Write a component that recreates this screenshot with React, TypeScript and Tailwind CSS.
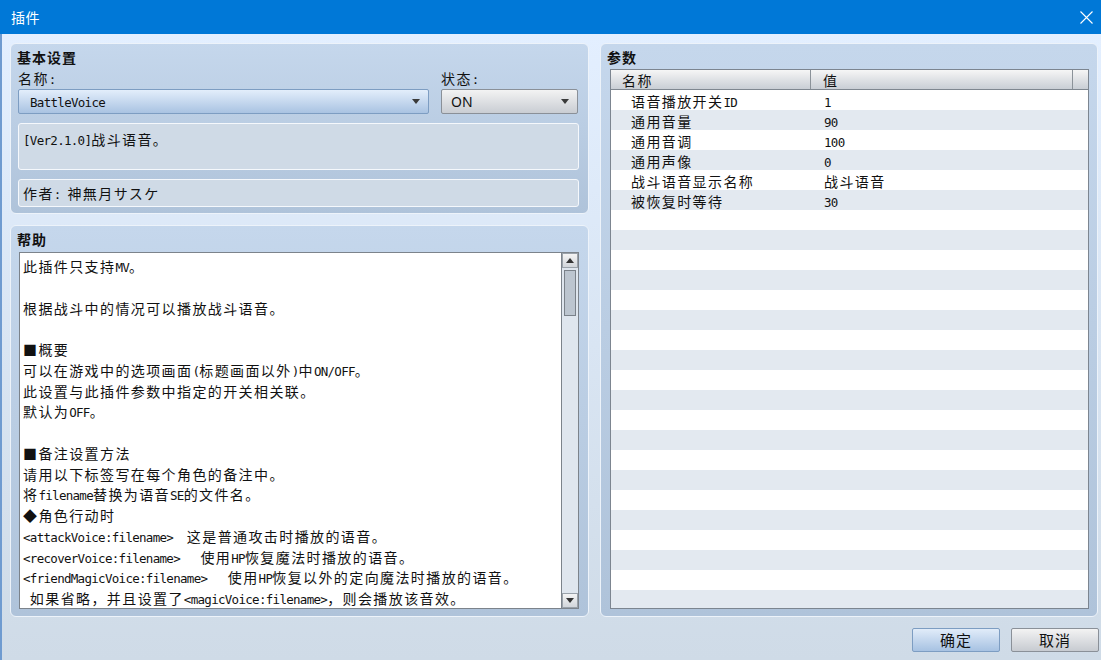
import { Fragment } from "react";

const helpLines = [
  "此插件只支持MV。",
  "",
  "根据战斗中的情况可以播放战斗语音。",
  "",
  "■概要",
  "可以在游戏中的选项画面(标题画面以外)中ON/OFF。",
  "此设置与此插件参数中指定的开关相关联。",
  "默认为OFF。",
  "",
  "■备注设置方法",
  "请用以下标签写在每个角色的备注中。",
  "将filename替换为语音SE的文件名。",
  "◆角色行动时",
  "<attackVoice:filename>  这是普通攻击时播放的语音。",
  "<recoverVoice:filename>   使用HP恢复魔法时播放的语音。",
  "<friendMagicVoice:filename>   使用HP恢复以外的定向魔法时播放的语音。",
  " 如果省略，并且设置了<magicVoice:filename>，则会播放该音效。",
];

const params = [
  { name: "语音播放开关ID", value: "1" },
  { name: "通用音量", value: "90" },
  { name: "通用音调", value: "100" },
  { name: "通用声像", value: "0" },
  { name: "战斗语音显示名称", value: "战斗语音" },
  { name: "被恢复时等待", value: "30" },
];

const ROW_COUNT = 26;

// the editor font: narrow half-width latin, wide CJK
const CJK = /([\u2E80-\u9FFF\u3000-\u303F\uFF00-\uFFEF\u25A0\u25C6]+)/;

function Txt({ children }: { children: string }) {
  const parts = children.split(CJK).filter((p) => p !== "");
  return (
    <>
      {parts.map((part, i) =>
        CJK.test(part) ? (
          <span key={i} className="font-['Noto_Sans_CJK_SC',sans-serif] text-[14px] tracking-[1.4px]">
            {part}
          </span>
        ) : (
          <span key={i} className="font-['DejaVu_Sans_Mono',monospace] text-[12.5px] tracking-[-0.7px]">
            {part}
          </span>
        ),
      )}
    </>
  );
}

function Caret() {
  return (
    <svg width="8" height="5" viewBox="0 0 8 5" aria-hidden="true">
      <path d="M0 0h8L4 5z" fill="#3a3a3a" />
    </svg>
  );
}

function Select({ value, blue }: { value: string; blue?: boolean }) {
  return (
    <div
      className={`flex h-[25px] w-full items-center justify-between rounded-[2px] border pr-[8px] leading-[20px] text-[#111] ${
        blue
          ? "border-[#7d9dc2] bg-gradient-to-b from-[#e3eefb] to-[#a9c3e2] pl-[11px]"
          : "border-[#8a9098] bg-gradient-to-b from-[#f3f3f3] to-[#c9cdd3] pl-[9px]"
      }`}
    >
      {blue ? (
        <span>
          <Txt>{value}</Txt>
        </span>
      ) : (
        <span className="font-['Noto_Sans',sans-serif] text-[14px]">{value}</span>
      )}
      <Caret />
    </div>
  );
}

function Panel({ title, className, children }: { title: string; className: string; children: React.ReactNode }) {
  return (
    <section
      className={`flex flex-col rounded-[6px] border border-[#edf3fa] bg-gradient-to-b from-[#c5d7ec] to-[#afc3da] ${className}`}
    >
      <h2 className="box-content h-[20px] pl-[3px] pt-[3px] text-[14px] font-bold leading-[20px] tracking-[1px] text-[#111]">
        {title}
      </h2>
      {children}
    </section>
  );
}

function ScrollArrow({ up }: { up?: boolean }) {
  return (
    <div className="flex h-[15px] shrink-0 items-center justify-center border border-[#9aa2aa] bg-gradient-to-b from-[#f4f4f4] to-[#d2d6db]">
      <svg width="8" height="5" viewBox="0 0 8 5" aria-hidden="true">
        <path d={up ? "M0 5h8L4 0z" : "M0 0h8L4 5z"} fill="#333" />
      </svg>
    </div>
  );
}

export default function App() {
  return (
    <div className="flex h-[660px] w-[1101px] flex-col overflow-hidden font-['Noto_Sans_CJK_SC','Noto_Sans',sans-serif] text-[#111]">
      <header className="flex h-[34px] shrink-0 items-center justify-between bg-[#0078d7] pl-[11px] pr-[8px] text-white">
        <span className="text-[14px] tracking-[0.5px]">插件</span>
        <svg width="13" height="13" viewBox="0 0 13 13" aria-hidden="true">
          <path d="M0.5 0.5l12 12M12.5 0.5l-12 12" stroke="#fff" strokeWidth="1.1" />
        </svg>
      </header>

      <div className="flex flex-1 flex-col border-l-2 border-[#6f9bd0] bg-gradient-to-b from-[#e3efff] to-[#cfdbe7] pl-[8px] pr-[2px] pt-[9px]">
        <div className="flex h-[574px] gap-[11px]">
          <div className="flex w-[579px] flex-col gap-[11px]">
            <Panel title="基本设置" className="h-[171px] shrink-0 px-[3px]">
              <div className="flex gap-[12px] pl-[4px] pr-[7px]">
                <div className="flex w-[411px] flex-col">
                  <span className="h-[22px] leading-[20px]">
                    <Txt>名称:</Txt>
                  </span>
                  <Select value="BattleVoice" blue />
                </div>
                <div className="flex flex-1 flex-col">
                  <span className="h-[22px] leading-[20px]">
                    <Txt>状态:</Txt>
                  </span>
                  <Select value="ON" />
                </div>
              </div>
              <div className="ml-[4px] mr-[6px] mt-[9px] h-[47px] rounded-[3px] border border-[#f5f8fc] bg-[#cfdae6] px-[4px] pt-[4px] leading-[20px]">
                <Txt>[Ver2.1.0]战斗语音。</Txt>
              </div>
              <div className="ml-[4px] mr-[6px] mt-[9px] flex h-[28px] items-center rounded-[3px] border border-[#f5f8fc] bg-[#cfdae6] px-[4px] leading-[20px]">
                <span>
                  <Txt>作者: 神無月サスケ</Txt>
                </span>
              </div>
            </Panel>

            <Panel title="帮助" className="flex-1 px-[3px]">
              <div className="ml-[5px] mr-[6px] mt-[3px] flex h-[357px] border border-[#7c838b] bg-white">
                <div className="flex-1 overflow-hidden pl-[3px] pt-[2px]">
                  {helpLines.map((line, i) => (
                    <div key={i} className="h-[20.75px] whitespace-pre leading-[20.75px]">
                      <Txt>{line}</Txt>
                    </div>
                  ))}
                </div>
                <div className="flex w-[17px] flex-col border-l border-[#7c838b] bg-[#dfe6ee]">
                  <ScrollArrow up />
                  <div className="mx-[2px] mt-[2px] h-[46px] border border-[#7a8189] bg-[#bcc5cf]" />
                  <div className="flex-1" />
                  <ScrollArrow />
                </div>
              </div>
            </Panel>
          </div>

          <Panel title="参数" className="w-[498px] px-[3px] pb-[7px]">
            <div className="ml-[6px] mr-[5px] mt-[2px] flex flex-1 flex-col overflow-hidden border border-[#7c8590] bg-white">
              <div className="flex h-[20px] shrink-0 border-b border-[#7f8790] bg-gradient-to-b from-[#f6f6f6] to-[#c9ced5] leading-[19px]">
                <div className="w-[200px] border-r border-[#8b9299] pl-[11px]">
                  <Txt>名称</Txt>
                </div>
                <div className="w-[262px] border-r border-[#8b9299] pl-[12px]">
                  <Txt>值</Txt>
                </div>
                <div className="flex-1" />
              </div>
              {Array.from({ length: ROW_COUNT }).map((_, i) => {
                const p = params[i];
                return (
                  <div
                    key={i}
                    className={`flex h-[20px] shrink-0 leading-[20px] ${i % 2 === 0 ? "bg-white" : "bg-[#e3e9f0]"}`}
                  >
                    {p ? (
                      <Fragment>
                        <div className="w-[200px] whitespace-nowrap pl-[20px]">
                          <Txt>{p.name}</Txt>
                        </div>
                        <div className="pl-[13px]">
                          <Txt>{p.value}</Txt>
                        </div>
                      </Fragment>
                    ) : null}
                  </div>
                );
              })}
            </div>
          </Panel>
        </div>

        <div className="mt-[11px] flex justify-end gap-[11px]">
          <button
            type="button"
            className="h-[24px] w-[88px] rounded-[2px] border border-[#7d9dc2] bg-gradient-to-b from-[#e1ecf9] to-[#a7c2e2] text-[15px] leading-[20px] tracking-[1px] text-[#111]"
          >
            确定
          </button>
          <button
            type="button"
            className="h-[24px] w-[88px] rounded-[2px] border border-[#8a9098] bg-gradient-to-b from-[#f3f3f3] to-[#c7cbd1] text-[15px] leading-[20px] tracking-[1px] text-[#111]"
          >
            取消
          </button>
        </div>
      </div>
    </div>
  );
}
